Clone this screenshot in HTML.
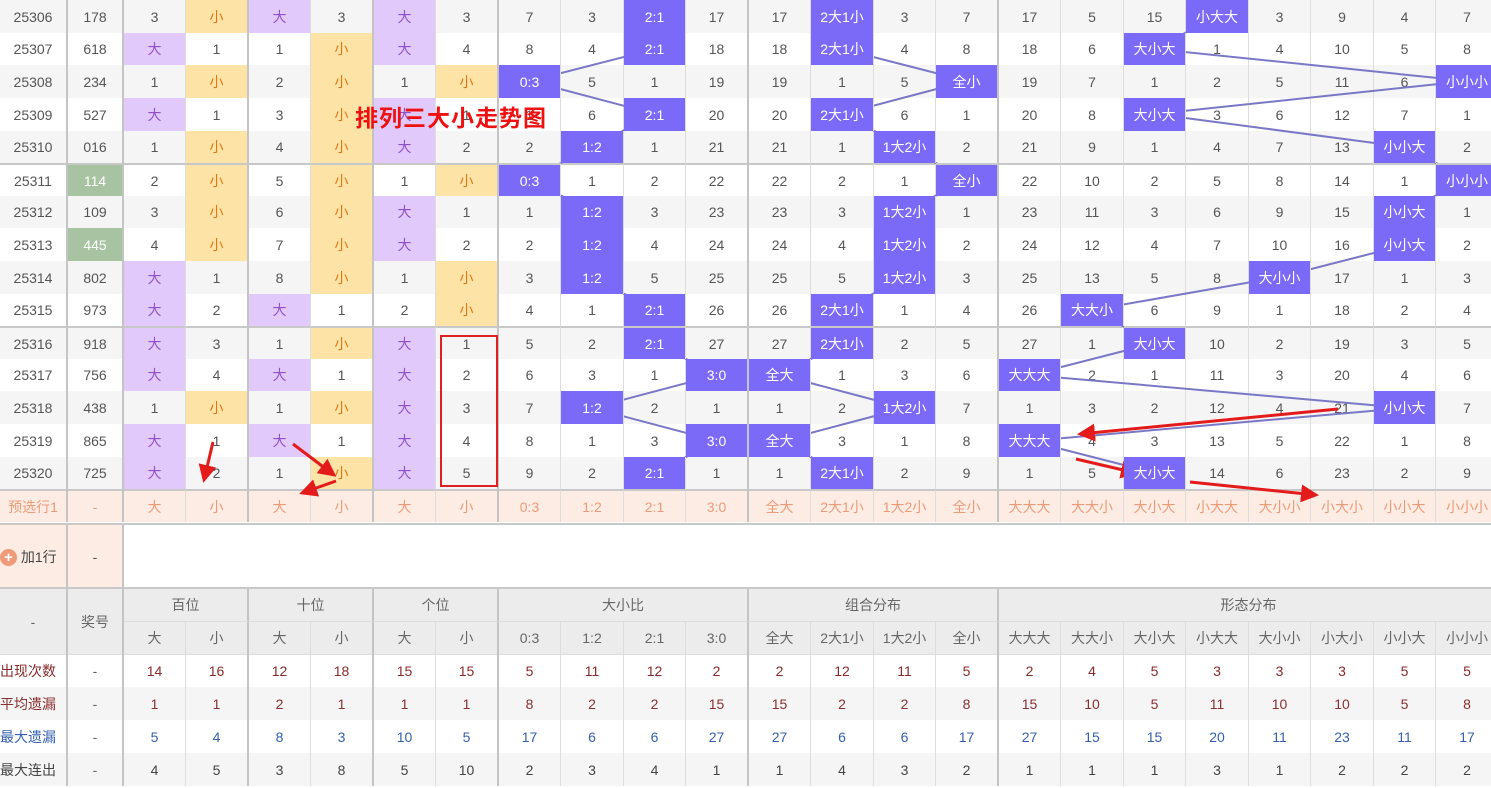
<!DOCTYPE html>
<html><head><meta charset="utf-8"><style>
*{margin:0;padding:0;box-sizing:border-box}
body{width:1491px;height:788px;overflow:hidden;background:#fff;font-family:"Liberation Sans","Noto Sans CJK SC",sans-serif;font-size:14px;color:#555;position:relative}
table{border-collapse:separate;border-spacing:0;table-layout:fixed;width:1499px;position:absolute;left:0}
td{text-align:center;border-right:1px solid #ddd;white-space:nowrap;overflow:hidden;height:33px;padding:0}
.m td:nth-child(1),.m td:nth-child(2),.m td:nth-child(4),.m td:nth-child(6),.m td:nth-child(8),.m td:nth-child(12),.m td:nth-child(16){border-right:2px solid #c4c4c4}
.m tr:nth-child(odd) td{background:#f5f5f5}
.m tr:nth-child(even) td{background:#fff}
.m tr.s td{height:32px}
.m tr.t td{border-top:2px solid #c8c8c8}
.m tr td.d{background:#e1c9fc;color:#9050c8}
.m tr td.x{background:#fde3a5;color:#e07818}
.m tr td.h{background:#7b69f7;color:#fff;position:relative;z-index:3}
.m tr td.g{background:#a7c3a2;color:#fff}
.m tr.p td{background:#fdece4;color:#ec9b78;border-top:2px solid #c8c8c8}
.hd td{background:#ececec;color:#666;border-bottom:1px solid #ddd}
.b{border-right:2px solid #c4c4c4 !important}
.st td{height:33px}
.st tr:nth-child(even) td{background:#f5f5f5}
.st td:nth-child(1),.st td:nth-child(2),.st td:nth-child(4),.st td:nth-child(6),.st td:nth-child(8),.st td:nth-child(12),.st td:nth-child(16){border-right:2px solid #c4c4c4}
.st td:first-child{text-align:left}
.r1 td{color:#8b2a2a}.r2 td{color:#8b3030}.r3 td{color:#3560b0}.r4 td{color:#444}
.st tr td:nth-child(2){color:#666}
svg{position:absolute;left:0;top:0;z-index:2;pointer-events:none}
.title{position:absolute;left:355px;top:99px;font-size:23px;font-weight:bold;color:#ee1111;z-index:5;letter-spacing:1px}
</style></head><body>
<table class="m" style="top:0">
<colgroup><col style="width:68px"><col style="width:56px"><col style="width:62px"><col style="width:63px"><col style="width:62px"><col style="width:63px"><col style="width:62px"><col style="width:63px"><col style="width:62px"><col style="width:63px"><col style="width:62px"><col style="width:63px"><col style="width:62px"><col style="width:63px"><col style="width:62px"><col style="width:63px"><col style="width:62px"><col style="width:63px"><col style="width:62px"><col style="width:63px"><col style="width:62px"><col style="width:63px"><col style="width:62px"><col style="width:63px"></colgroup>
<tr><td>25306</td><td>178</td><td>3</td><td class="x">小</td><td class="d">大</td><td>3</td><td class="d">大</td><td>3</td><td>7</td><td>3</td><td class="h">2:1</td><td>17</td><td>17</td><td class="h">2大1小</td><td>3</td><td>7</td><td>17</td><td>5</td><td>15</td><td class="h">小大大</td><td>3</td><td>9</td><td>4</td><td>7</td></tr>
<tr class="s"><td>25307</td><td>618</td><td class="d">大</td><td>1</td><td>1</td><td class="x">小</td><td class="d">大</td><td>4</td><td>8</td><td>4</td><td class="h">2:1</td><td>18</td><td>18</td><td class="h">2大1小</td><td>4</td><td>8</td><td>18</td><td>6</td><td class="h">大小大</td><td>1</td><td>4</td><td>10</td><td>5</td><td>8</td></tr>
<tr><td>25308</td><td>234</td><td>1</td><td class="x">小</td><td>2</td><td class="x">小</td><td>1</td><td class="x">小</td><td class="h">0:3</td><td>5</td><td>1</td><td>19</td><td>19</td><td>1</td><td>5</td><td class="h">全小</td><td>19</td><td>7</td><td>1</td><td>2</td><td>5</td><td>11</td><td>6</td><td class="h">小小小</td></tr>
<tr><td>25309</td><td>527</td><td class="d">大</td><td>1</td><td>3</td><td class="x">小</td><td class="d">大</td><td>1</td><td>1</td><td>6</td><td class="h">2:1</td><td>20</td><td>20</td><td class="h">2大1小</td><td>6</td><td>1</td><td>20</td><td>8</td><td class="h">大小大</td><td>3</td><td>6</td><td>12</td><td>7</td><td>1</td></tr>
<tr class="s"><td>25310</td><td>016</td><td>1</td><td class="x">小</td><td>4</td><td class="x">小</td><td class="d">大</td><td>2</td><td>2</td><td class="h">1:2</td><td>1</td><td>21</td><td>21</td><td>1</td><td class="h">1大2小</td><td>2</td><td>21</td><td>9</td><td>1</td><td>4</td><td>7</td><td>13</td><td class="h">小小大</td><td>2</td></tr>
<tr class="t"><td>25311</td><td class="g">114</td><td>2</td><td class="x">小</td><td>5</td><td class="x">小</td><td>1</td><td class="x">小</td><td class="h">0:3</td><td>1</td><td>2</td><td>22</td><td>22</td><td>2</td><td>1</td><td class="h">全小</td><td>22</td><td>10</td><td>2</td><td>5</td><td>8</td><td>14</td><td>1</td><td class="h">小小小</td></tr>
<tr class="s"><td>25312</td><td>109</td><td>3</td><td class="x">小</td><td>6</td><td class="x">小</td><td class="d">大</td><td>1</td><td>1</td><td class="h">1:2</td><td>3</td><td>23</td><td>23</td><td>3</td><td class="h">1大2小</td><td>1</td><td>23</td><td>11</td><td>3</td><td>6</td><td>9</td><td>15</td><td class="h">小小大</td><td>1</td></tr>
<tr><td>25313</td><td class="g">445</td><td>4</td><td class="x">小</td><td>7</td><td class="x">小</td><td class="d">大</td><td>2</td><td>2</td><td class="h">1:2</td><td>4</td><td>24</td><td>24</td><td>4</td><td class="h">1大2小</td><td>2</td><td>24</td><td>12</td><td>4</td><td>7</td><td>10</td><td>16</td><td class="h">小小大</td><td>2</td></tr>
<tr><td>25314</td><td>802</td><td class="d">大</td><td>1</td><td>8</td><td class="x">小</td><td>1</td><td class="x">小</td><td>3</td><td class="h">1:2</td><td>5</td><td>25</td><td>25</td><td>5</td><td class="h">1大2小</td><td>3</td><td>25</td><td>13</td><td>5</td><td>8</td><td class="h">大小小</td><td>17</td><td>1</td><td>3</td></tr>
<tr class="s"><td>25315</td><td>973</td><td class="d">大</td><td>2</td><td class="d">大</td><td>1</td><td>2</td><td class="x">小</td><td>4</td><td>1</td><td class="h">2:1</td><td>26</td><td>26</td><td class="h">2大1小</td><td>1</td><td>4</td><td>26</td><td class="h">大大小</td><td>6</td><td>9</td><td>1</td><td>18</td><td>2</td><td>4</td></tr>
<tr class="t"><td>25316</td><td>918</td><td class="d">大</td><td>3</td><td>1</td><td class="x">小</td><td class="d">大</td><td>1</td><td>5</td><td>2</td><td class="h">2:1</td><td>27</td><td>27</td><td class="h">2大1小</td><td>2</td><td>5</td><td>27</td><td>1</td><td class="h">大小大</td><td>10</td><td>2</td><td>19</td><td>3</td><td>5</td></tr>
<tr class="s"><td>25317</td><td>756</td><td class="d">大</td><td>4</td><td class="d">大</td><td>1</td><td class="d">大</td><td>2</td><td>6</td><td>3</td><td>1</td><td class="h">3:0</td><td class="h">全大</td><td>1</td><td>3</td><td>6</td><td class="h">大大大</td><td>2</td><td>1</td><td>11</td><td>3</td><td>20</td><td>4</td><td>6</td></tr>
<tr><td>25318</td><td>438</td><td>1</td><td class="x">小</td><td>1</td><td class="x">小</td><td class="d">大</td><td>3</td><td>7</td><td class="h">1:2</td><td>2</td><td>1</td><td>1</td><td>2</td><td class="h">1大2小</td><td>7</td><td>1</td><td>3</td><td>2</td><td>12</td><td>4</td><td>21</td><td class="h">小小大</td><td>7</td></tr>
<tr><td>25319</td><td>865</td><td class="d">大</td><td>1</td><td class="d">大</td><td>1</td><td class="d">大</td><td>4</td><td>8</td><td>1</td><td>3</td><td class="h">3:0</td><td class="h">全大</td><td>3</td><td>1</td><td>8</td><td class="h">大大大</td><td>4</td><td>3</td><td>13</td><td>5</td><td>22</td><td>1</td><td>8</td></tr>
<tr class="s"><td>25320</td><td>725</td><td class="d">大</td><td>2</td><td>1</td><td class="x">小</td><td class="d">大</td><td>5</td><td>9</td><td>2</td><td class="h">2:1</td><td>1</td><td>1</td><td class="h">2大1小</td><td>2</td><td>9</td><td>1</td><td>5</td><td class="h">大小大</td><td>14</td><td>6</td><td>23</td><td>2</td><td>9</td></tr>
<tr class="p"><td>预选行1</td><td>-</td><td>大</td><td>小</td><td>大</td><td>小</td><td>大</td><td>小</td><td>0:3</td><td>1:2</td><td>2:1</td><td>3:0</td><td>全大</td><td>2大1小</td><td>1大2小</td><td>全小</td><td>大大大</td><td>大大小</td><td>大小大</td><td>小大大</td><td>大小小</td><td>小大小</td><td>小小大</td><td>小小小</td></tr>
</table>

<table style="top:523px;border-top:2px solid #c8c8c8">
<colgroup><col style="width:68px"><col style="width:56px"><col></colgroup>
<tr><td class="b" style="height:63px;background:#fdece4;text-align:left;color:#444;font-size:14px"><span style="display:inline-block;width:17px;height:17px;border-radius:50%;background:#ef9a78;color:#fff;font-size:15px;line-height:17px;text-align:center;vertical-align:middle;font-weight:bold">+</span> 加1行</td><td class="b" style="background:#fdece4">-</td><td style="background:#fff"></td></tr>
</table>

<table class="hd" style="top:587px;border-top:2px solid #c8c8c8">
<colgroup><col style="width:68px"><col style="width:56px"><col style="width:62px"><col style="width:63px"><col style="width:62px"><col style="width:63px"><col style="width:62px"><col style="width:63px"><col style="width:62px"><col style="width:63px"><col style="width:62px"><col style="width:63px"><col style="width:62px"><col style="width:63px"><col style="width:62px"><col style="width:63px"><col style="width:62px"><col style="width:63px"><col style="width:62px"><col style="width:63px"><col style="width:62px"><col style="width:63px"><col style="width:62px"><col style="width:63px"></colgroup>
<tr><td rowspan="2" class="b">-</td><td rowspan="2" class="b">奖号</td><td colspan="2" class="b" style="height:33px">百位</td><td colspan="2" class="b">十位</td><td colspan="2" class="b">个位</td><td colspan="4" class="b">大小比</td><td colspan="4" class="b">组合分布</td><td colspan="8">形态分布</td></tr>
<tr><td style="height:33px">大</td><td class="b">小</td><td>大</td><td class="b">小</td><td>大</td><td class="b">小</td><td>0:3</td><td>1:2</td><td>2:1</td><td class="b">3:0</td><td>全大</td><td>2大1小</td><td>1大2小</td><td class="b">全小</td><td>大大大</td><td>大大小</td><td>大小大</td><td>小大大</td><td>大小小</td><td>小大小</td><td>小小大</td><td>小小小</td></tr>
</table>

<table class="st" style="top:654px">
<colgroup><col style="width:68px"><col style="width:56px"><col style="width:62px"><col style="width:63px"><col style="width:62px"><col style="width:63px"><col style="width:62px"><col style="width:63px"><col style="width:62px"><col style="width:63px"><col style="width:62px"><col style="width:63px"><col style="width:62px"><col style="width:63px"><col style="width:62px"><col style="width:63px"><col style="width:62px"><col style="width:63px"><col style="width:62px"><col style="width:63px"><col style="width:62px"><col style="width:63px"><col style="width:62px"><col style="width:63px"></colgroup>
<tr class="r1"><td>出现次数</td><td>-</td><td>14</td><td>16</td><td>12</td><td>18</td><td>15</td><td>15</td><td>5</td><td>11</td><td>12</td><td>2</td><td>2</td><td>12</td><td>11</td><td>5</td><td>2</td><td>4</td><td>5</td><td>3</td><td>3</td><td>3</td><td>5</td><td>5</td></tr>
<tr class="r2"><td>平均遗漏</td><td>-</td><td>1</td><td>1</td><td>2</td><td>1</td><td>1</td><td>1</td><td>8</td><td>2</td><td>2</td><td>15</td><td>15</td><td>2</td><td>2</td><td>8</td><td>15</td><td>10</td><td>5</td><td>11</td><td>10</td><td>10</td><td>5</td><td>8</td></tr>
<tr class="r3"><td>最大遗漏</td><td>-</td><td>5</td><td>4</td><td>8</td><td>3</td><td>10</td><td>5</td><td>17</td><td>6</td><td>6</td><td>27</td><td>27</td><td>6</td><td>6</td><td>17</td><td>27</td><td>15</td><td>15</td><td>20</td><td>11</td><td>23</td><td>11</td><td>17</td></tr>
<tr class="r4"><td>最大连出</td><td>-</td><td>4</td><td>5</td><td>3</td><td>8</td><td>5</td><td>10</td><td>2</td><td>3</td><td>4</td><td>1</td><td>1</td><td>4</td><td>3</td><td>2</td><td>1</td><td>1</td><td>1</td><td>3</td><td>1</td><td>2</td><td>2</td><td>2</td></tr>
</table>

<svg width="1491" height="788">
<defs><marker id="a" markerWidth="6" markerHeight="6" refX="5" refY="3" orient="auto"><path d="M0,0 L6,3 L0,6 Z" fill="#e31b1b"/></marker></defs>
<g fill="none" stroke="#7a78c6" stroke-width="2">
<polyline points="655,16 655,49 530,81 655,114 592,147 530,179 592,212 592,245 592,277 655,310 655,343 717,375 592,408 717,441 655,473"/>
<polyline points="842,16 842,49 967,81 842,114 905,147 967,179 905,212 905,245 905,277 842,310 842,343 780,375 905,408 780,441 842,473"/>
<polyline points="1217,16 1155,49 1467,81 1155,114 1405,147 1467,179 1405,212 1405,245 1280,277 1092,310 1155,343 1030,375 1405,408 1030,441 1155,473"/>
</g>
<g stroke="#e31b1b" stroke-width="3" fill="none" marker-end="url(#a)">
<line x1="213" y1="442" x2="204" y2="480"/>
<line x1="293" y1="444" x2="334" y2="475"/>
<line x1="336" y1="481" x2="302" y2="493"/>
<line x1="1338" y1="409" x2="1080" y2="434"/>
<line x1="1076" y1="459" x2="1136" y2="473"/>
<line x1="1190" y1="482" x2="1316" y2="495"/>
</g>
<rect x="441" y="336" width="56" height="150" fill="none" stroke="#e02020" stroke-width="2"/>
</svg>
<div class="title">排列三大小走势图</div>
</body></html>
